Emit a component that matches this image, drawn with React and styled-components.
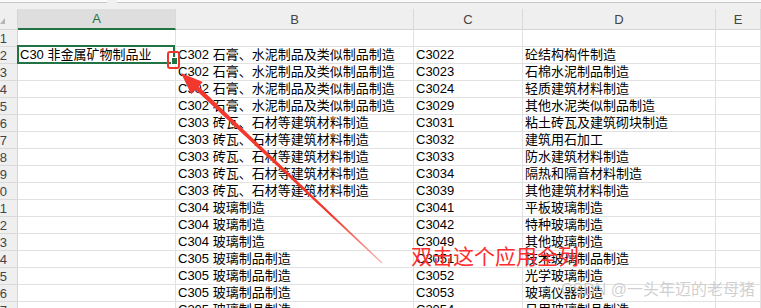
import React from 'react';
import styled, { createGlobalStyle } from 'styled-components';

const COLS = '18px 158px 238px 109px 193px 1fr';
const FONT = '"Liberation Sans", "Noto Sans CJK SC", sans-serif';

const B302 = 'C302 石膏、水泥制品及类似制品制造';
const B303 = 'C303 砖瓦、石材等建筑材料制造';
const B304 = 'C304 玻璃制造';
const B305 = 'C305 玻璃制品制造';

const rows = [
  ['', '', '', ''],
  ['C30 非金属矿物制品业', B302, 'C3022', '砼结构构件制造'],
  ['', B302, 'C3023', '石棉水泥制品制造'],
  ['', B302, 'C3024', '轻质建筑材料制造'],
  ['', B302, 'C3029', '其他水泥类似制品制造'],
  ['', B303, 'C3031', '粘土砖瓦及建筑砌块制造'],
  ['', B303, 'C3032', '建筑用石加工'],
  ['', B303, 'C3033', '防水建筑材料制造'],
  ['', B303, 'C3034', '隔热和隔音材料制造'],
  ['', B303, 'C3039', '其他建筑材料制造'],
  ['', B304, 'C3041', '平板玻璃制造'],
  ['', B304, 'C3042', '特种玻璃制造'],
  ['', B304, 'C3049', '其他玻璃制造'],
  ['', B305, 'C3051', '技术玻璃制品制造'],
  ['', B305, 'C3052', '光学玻璃制造'],
  ['', B305, 'C3053', '玻璃仪器制造'],
  ['', B305, 'C3054', '日用玻璃制品制造'],
];

const GlobalStyle = createGlobalStyle`
  html, body {
    margin: 0;
    padding: 0;
    background: #ffffff;
    overflow: hidden;
  }
  body {
    font-family: ${FONT};
  }
`;

const Sheet = styled.div`
  position: relative;
  width: 761px;
  height: 308px;
  overflow: hidden;
  background: #ffffff;
`;

const TopStrip = styled.div`
  height: 9px;
  background: #f0f0f0;
  display: flex;
  gap: 10px;
  align-items: flex-start;
`;

const FormulaEdge = styled.div`
  height: 2px;
  width: ${(p) => p.$w || 'auto'};
  flex: ${(p) => (p.$w ? 'none' : '1')};
  background: #fbfbfb;
  border-bottom: 1px solid #c8c8c8;
`;

const HeaderRow = styled.div`
  display: grid;
  grid-template-columns: ${COLS};
  height: 21px;
  background: #efefef;
`;

const Corner = styled.div`
  position: relative;
  border-right: 1px solid #d4d4d4;
  border-bottom: 1px solid #d4d4d4;

  &::after {
    content: '';
    position: absolute;
    left: 0;
    bottom: 5px;
    border-style: solid;
    border-width: 0 0 6px 5px;
    border-color: transparent transparent #b4b4b4 transparent;
  }
`;

const ColHead = styled.div`
  display: flex;
  align-items: center;
  justify-content: center;
  font-size: 13px;
  color: ${(p) => (p.$active ? '#217346' : '#444444')};
  background: ${(p) => (p.$active ? '#dedede' : 'transparent')};
  border-right: 1px solid #d9d9d9;
  border-bottom: ${(p) => (p.$active ? '2px solid #217346' : '1px solid #d4d4d4')};
`;

const Row = styled.div`
  display: grid;
  grid-template-columns: ${COLS};
  height: 17px;
`;

const RowHead = styled.div`
  display: flex;
  justify-content: flex-end;
  align-items: center;
  padding-right: 10px;
  overflow: hidden;
  font-size: 13px;
  color: #444444;
  background: #efefef;
  border-right: 1px solid #d4d4d4;
  border-bottom: 1px solid #dadada;
`;

const Cell = styled.div`
  padding-left: 2px;
  font-size: 13px;
  line-height: 16px;
  color: #000000;
  white-space: nowrap;
  overflow: hidden;
  border-right: 1px solid #e1e1e1;
  border-bottom: 1px solid #e1e1e1;
`;

const Selection = styled.div`
  position: absolute;
  left: 17px;
  top: 45px;
  width: 158px;
  height: 19px;
  box-sizing: border-box;
  border: 2px solid #217346;
  pointer-events: none;
`;

const FillHandle = styled.div`
  position: absolute;
  left: 172px;
  top: 58px;
  width: 5px;
  height: 6px;
  background: #217346;
  box-shadow: 0 0 0 1px #ffffff;
`;

const HandleMark = styled.div`
  position: absolute;
  left: 167px;
  top: 51px;
  width: 13px;
  height: 18px;
  box-sizing: border-box;
  border: 2px solid #f0362b;
  border-radius: 3px;
`;

const Arrow = styled.svg`
  position: absolute;
  left: 0;
  top: 0;
  width: 761px;
  height: 308px;
  pointer-events: none;
`;

const Note = styled.div`
  position: absolute;
  left: 411px;
  top: 245px;
  font-family: "Noto Sans CJK SC", sans-serif;
  font-size: 21px;
  line-height: 21px;
  color: #ff2d2d;
  white-space: nowrap;
`;

const Watermark = styled.div`
  position: absolute;
  right: 6px;
  top: 282px;
  font-family: "Liberation Sans", "Noto Sans CJK SC", sans-serif;
  font-size: 16px;
  line-height: 16px;
  color: rgba(200, 200, 200, 0.85);
  white-space: nowrap;
`;

export default function App() {
  return (
    <>
      <GlobalStyle />
      <Sheet>
        <TopStrip>
          <FormulaEdge $w="107px" />
          <FormulaEdge />
        </TopStrip>
        <HeaderRow>
          <Corner />
          {['A', 'B', 'C', 'D', 'E'].map((c) => (
            <ColHead key={c} $active={c === 'A'}>
              {c}
            </ColHead>
          ))}
        </HeaderRow>
        {rows.map((r, i) => (
          <Row key={i}>
            <RowHead>{i + 1}</RowHead>
            {r.map((v, j) => (
              <Cell key={j}>{v}</Cell>
            ))}
            <Cell />
          </Row>
        ))}

        <Selection />
        <FillHandle />
        <HandleMark />

        <Arrow viewBox="0 0 761 308">
          <defs>
            <linearGradient id="arrowFade" gradientUnits="userSpaceOnUse" x1="181" y1="73" x2="382" y2="263">
              <stop offset="0" stopColor="#f2382c" stopOpacity="1" />
              <stop offset="0.75" stopColor="#f2382c" stopOpacity="1" />
              <stop offset="1" stopColor="#f2382c" stopOpacity="0.4" />
            </linearGradient>
          </defs>
          <polygon
            fill="url(#arrowFade)"
            points="181,73 202.8,81.9 198.6,86.4 382.4,262.6 381.6,263.4 195.4,89.8 191.2,94.3"
          />
        </Arrow>

        <Note>双击这个应用全列</Note>
        <Watermark>CSDN @一头年迈的老母猪</Watermark>
      </Sheet>
    </>
  );
}
